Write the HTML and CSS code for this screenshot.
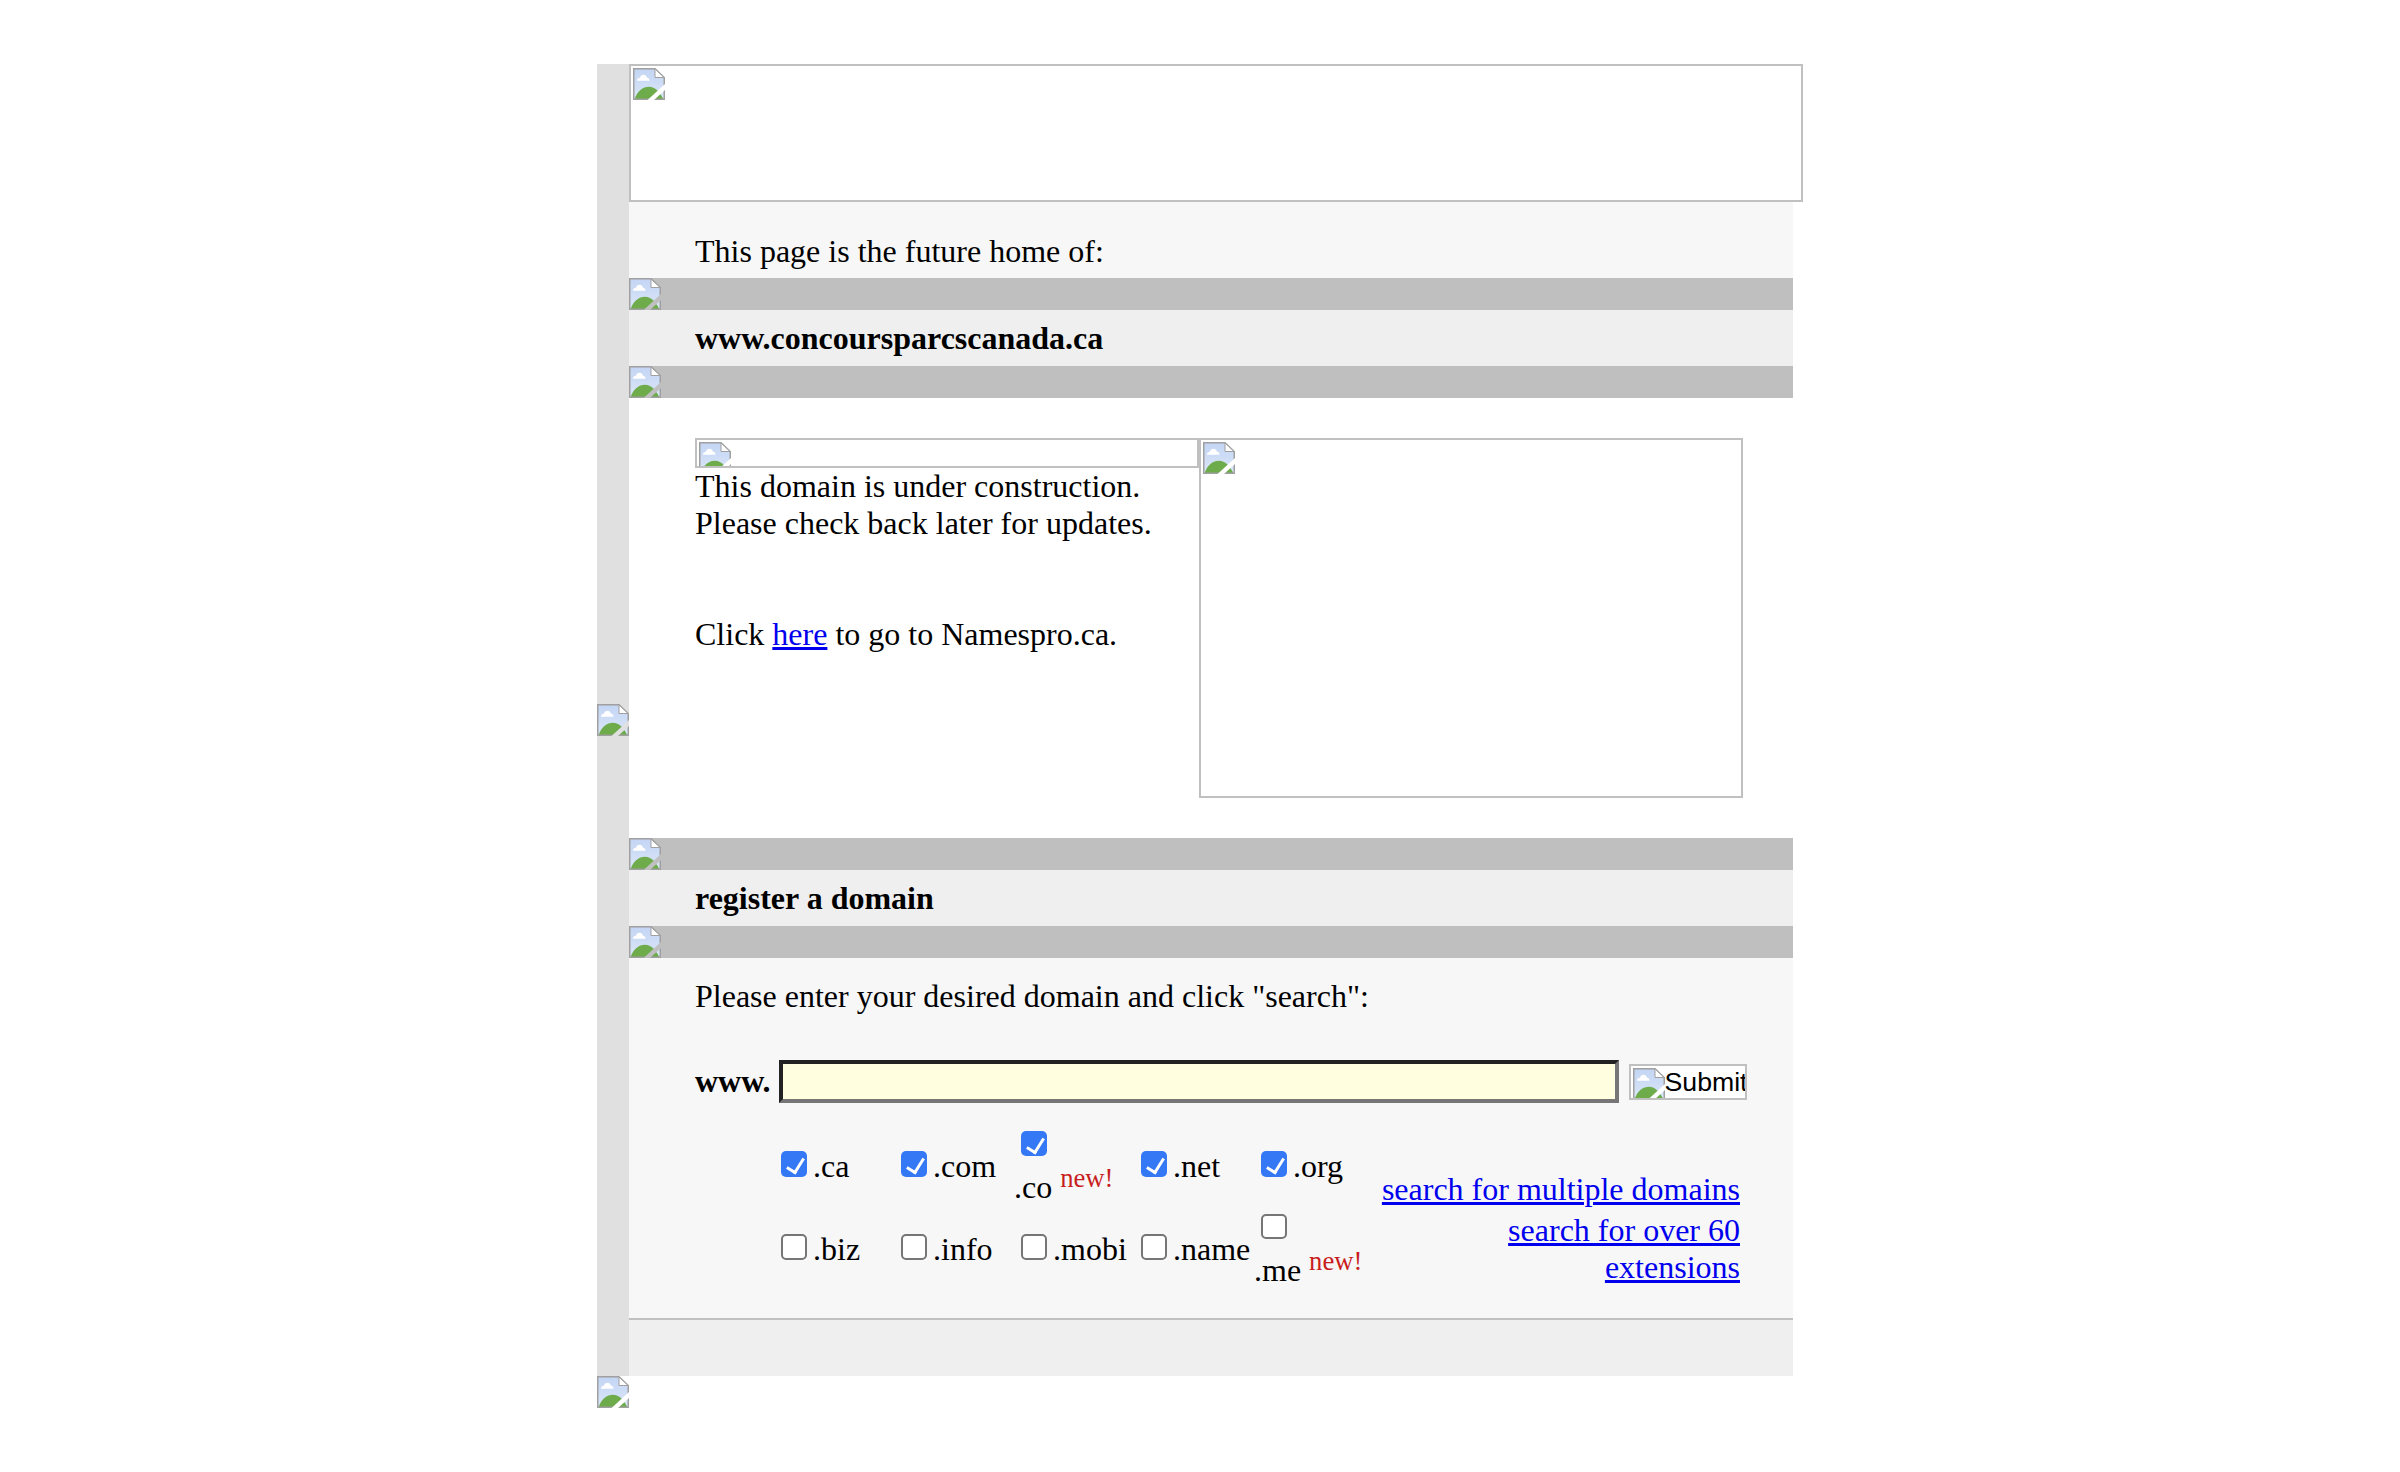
FILE: index.html
```html
<html>
<head>
	<title>www.concoursparcscanada.ca</title>
	<meta charset="UTF-8">
	<link rel="stylesheet" href="styles.css">
</head>
<body>
	<svg class="sprite">
		<defs>
			<linearGradient id="sky" x1="0" y1="0" x2="0" y2="1">
				<stop offset="0" stop-color="#c3d5f4"/>
				<stop offset="1" stop-color="#dbe6f8"/>
			</linearGradient>
			<mask id="slash">
				<rect width="32" height="32" fill="#fff"/>
				<polygon points="14.5,32 32,16 32,22 21,32" fill="#000"/>
			</mask>
			<symbol id="broken" viewBox="0 0 32 32">
				<g mask="url(#slash)">
					<path d="M.75.75H22L31.25 9.5V31.25H.75Z" fill="url(#sky)"/>
					<path d="M1.500 31.500C4 23 10 18.700 16 18.700C22 18.700 27 24 30.500 31.500Z" fill="#6dab4b"/>
					<path d="M4 12.700C4 10.500 5.500 9.700 7 9.700C7.500 6 13 5.500 14 9.700C15.500 9.700 16.500 11 16.500 12.700Z" fill="#fff"/>
					<path d="M.75.75H22L31.25 9.500V31.250H.75Z" fill="none" stroke="#a0a0a0" stroke-width="1.500"/>
					<path d="M22 1V9.500H31Z" fill="#fff" stroke="#a0a0a0" stroke-width="1"/>
				</g>
			</symbol>
		</defs>
	</svg>

	<div class="page">
		<div class="strip">
			<svg class="broken"><use href="#broken"/></svg>
		</div>
		<div class="main">
			<div class="frame banner"><svg class="broken"><use href="#broken"/></svg></div>

			<div class="band intro">This page is the future home of:</div>
			<div class="bar"><svg class="broken"><use href="#broken"/></svg></div>
			<div class="head">www.concoursparcscanada.ca</div>
			<div class="bar"><svg class="broken"><use href="#broken"/></svg></div>

			<div class="notice">
				<div class="notice-text">
					<div class="frame small"><svg class="broken"><use href="#broken"/></svg></div>
					This domain is under construction.<br>
					Please check back later for updates.<br>
					<br>
					<br>
					Click <a href="#">here</a> to go to Namespro.ca.
				</div>
				<div class="frame side"><svg class="broken"><use href="#broken"/></svg></div>
			</div>

			<div class="bar"><svg class="broken"><use href="#broken"/></svg></div>
			<div class="head">register a domain</div>
			<div class="bar"><svg class="broken"><use href="#broken"/></svg></div>

			<div class="search">
				<div class="prompt">Please enter your desired domain and click "search":</div>
				<div class="query">
					<b>www.</b>
					<input type="text" class="domain">
					<button class="submit"><svg class="broken"><use href="#broken"/></svg>Submit</button>
				</div>
				<div class="options">
					<div class="tlds">
						<label class="tld"><input type="checkbox" checked>.ca</label>
						<label class="tld"><input type="checkbox" checked>.com</label>
						<label class="tld wrap"><input type="checkbox" checked><span>.co <small>new!</small></span></label>
						<label class="tld"><input type="checkbox" checked>.net</label>
						<label class="tld"><input type="checkbox" checked>.org</label>
						<label class="tld"><input type="checkbox">.biz</label>
						<label class="tld"><input type="checkbox">.info</label>
						<label class="tld"><input type="checkbox">.mobi</label>
						<label class="tld"><input type="checkbox">.name</label>
						<label class="tld wrap"><input type="checkbox"><span>.me <small>new!</small></span></label>
					</div>
					<div class="links">
						<a href="#">search for multiple domains</a>
						<a href="#">search for over 60 extensions</a>
					</div>
				</div>
			</div>
			<div class="foot"></div>
		</div>
	</div>
	<div class="tail"><svg class="broken"><use href="#broken"/></svg></div>
</body>
</html>
```

FILE: styles.css
```css
* {
	margin: 0;
	padding: 0;
	box-sizing: border-box;
}
body {
	padding: 64px 0 0 597px;
	background: #fff;
	color: #000;
	font-family: "Liberation Serif", serif;
	font-size: 32px;
}
a {
	color: #00e;
}
.sprite {
	display: block;
	width: 0;
	height: 0;
}
.broken {
	display: block;
	width: 32px;
	height: 32px;
	flex: none;
}
.page {
	display: flex;
	width: 1206px;
}
.strip {
	display: flex;
	align-items: center;
	width: 32px;
	background: #e0e0e0;
}
.main {
	width: 1174px;
}
.frame {
	border: 2px solid #c0c0c0;
	padding: 2px;
	overflow: hidden;
	background: #fff;
}
.banner {
	height: 138px;
}
.band,.head,.notice,.search,.foot,.bar {
	margin-right: 10px;
}
.intro {
	height: 76px;
	padding: 31px 0 0 66px;
	background: #f7f7f7;
}
.bar {
	height: 32px;
	background: #bfbfbf;
}
.head {
	height: 56px;
	padding: 10px 0 0 66px;
	background: #efefef;
	font-weight: bold;
}
.notice {
	display: flex;
	padding: 40px 0 40px 66px;
	background: #fff;
}
.notice-text {
	width: 504px;
}
.small {
	width: 504px;
	height: 30px;
}
.side {
	width: 544px;
	height: 360px;
}
.search {
	height: 362px;
	padding: 20px 0 0 66px;
	background: #f7f7f7;
	border-bottom: 2px solid #c0c0c0;
}
.query {
	display: flex;
	align-items: center;
	margin-top: 45px;
}
.domain {
	width: 840px;
	height: 43px;
	margin: 0 10px 0 8px;
	border: 4px solid;
	border-color: #222 #767676 #767676 #222;
	background: #ffffe0;
}
.submit {
	display: flex;
	align-items: flex-start;
	width: 118px;
	height: 36px;
	padding: 2px;
	overflow: hidden;
	border: 2px solid #c0c0c0;
	background: #fff;
	font-family: "Liberation Sans", sans-serif;
	font-size: 26.67px;
	line-height: 28px;
}
.options {
	display: flex;
	align-items: center;
	margin-top: 24px;
}
.tlds {
	display: grid;
	grid-template-columns: repeat(5, 120px);
	grid-auto-rows: 79px;
	row-gap: 4px;
	margin-left: 78px;
	width: 600px;
}
.tld {
	display: flex;
	align-items: center;
}
.tld input {
	position: relative;
	appearance: none;
	width: 26px;
	height: 26px;
	margin: 0 6px 6px 8px;
	border: 2px solid #767676;
	border-radius: 5px;
	background: #fff;
}
.tld input:checked {
	border: none;
	background: #3478f6;
}
.tld input:checked::after {
	content: "";
	position: absolute;
	left: 9px;
	top: 4px;
	width: 8px;
	height: 15px;
	border: solid #fff;
	border-width: 0 3px 3px 0;
	transform: rotate(32deg);
}
.wrap {
	flex-direction: column;
	align-items: flex-start;
	padding-left: 1px;
}
.tld.wrap input {
	margin: 4px 0 13px 7px;
}
.wrap span {
	white-space: nowrap;
}
small {
	position: relative;
	top: -11px;
	color: #c81e1e;
	font-size: 26.67px;
}
.links {
	display: flex;
	flex-direction: column;
	gap: 4px;
	width: 360px;
	margin: 40px 0 0 7px;
	text-align: right;
}
.foot {
	height: 56px;
	background: #efefef;
}
```
